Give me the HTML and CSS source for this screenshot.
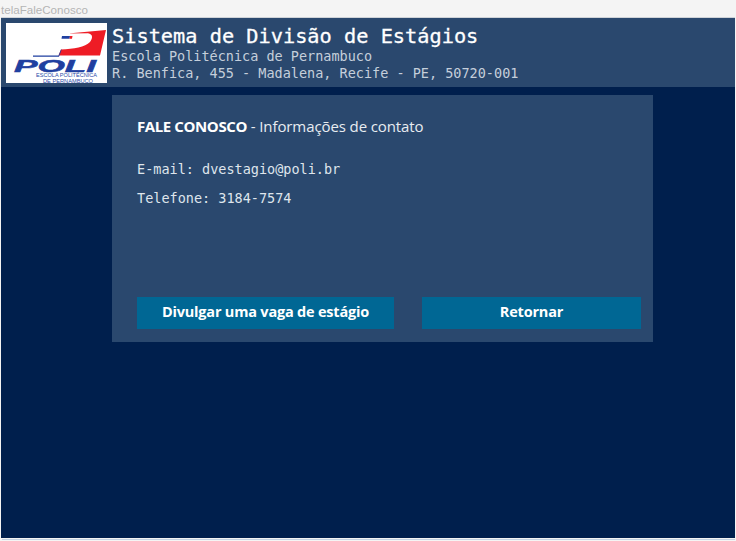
FILE: index.html
```html
<!DOCTYPE html>
<html lang="pt">
<head>
<meta charset="utf-8">
<title>telaFaleConosco</title>
<link rel="stylesheet" href="styles.css">
</head>
<body>
<div class="window">
  <div class="titlebar">telaFaleConosco</div>
  <div class="content">
    <header class="header">
      <svg class="logo" viewBox="0 0 101 60" width="101" height="60">
        <rect width="101" height="60" fill="#fff"/>
        <path d="M62 10.500L100 7L94 32.500H52.500L55 26.500C68 26 79 24 84 19C87 15 87 11 82 10.200Z" fill="#ee1c25"/>
        <path d="M56 13H64L63.500 15.700H55.500Z" fill="#1f3fa0"/>
        <path d="M64 13H66.500L66 15.700H63.500Z" fill="#ee1c25"/>
        <path d="M27 32.500H52.500L55 26.500H55.700L53 33.700H27Z" fill="#1f3fa0"/>
        <text class="logo-poli" x="8" y="49" textLength="82" lengthAdjust="spacingAndGlyphs">POLI</text>
        <text class="logo-small" x="30" y="53.500" textLength="61" lengthAdjust="spacingAndGlyphs">ESCOLA POLITÉCNICA</text>
        <text class="logo-small" x="37" y="59.500" textLength="50" lengthAdjust="spacingAndGlyphs">DE PERNAMBUCO</text>
      </svg>
      <div class="brand">
        <div class="brand-title">Sistema de Divisão de Estágios</div>
        <div class="brand-school">Escola Politécnica de Pernambuco</div>
        <div class="brand-address">R. Benfica, 455 - Madalena, Recife - PE, 50720-001</div>
      </div>
    </header>
    <main class="panel">
      <h1 class="panel-title"><strong>FALE CONOSCO</strong> - Informações de contato</h1>
      <p class="info">E-mail: dvestagio@poli.br</p>
      <p class="info">Telefone: 3184-7574</p>
      <div class="actions">
        <button class="btn btn-wide">Divulgar uma vaga de estágio</button>
        <button class="btn btn-narrow">Retornar</button>
      </div>
    </main>
  </div>
  <div class="footer-line"></div>
</div>
</body>
</html>
```
FILE: styles.css
```css
* { box-sizing: border-box; }
html, body { margin: 0; height: 100%; }
body { background: #f4f4f4; overflow: hidden; }
.window { width: 736px; height: 541px; display: flex; flex-direction: column; }
.titlebar {
  height: 17px;
  padding: 2px 0 0 1px;
  font: 11.600px/15px "Liberation Sans", sans-serif;
  color: #b4b4b4;
  background: #f4f4f4;
}
.content {
  height: 521px;
  margin: 0 1px;
  background: #001f4d;
  border-top: 1px solid #cfd3d8;
}
.footer-line {
  height: 1px;
  margin: 1px 1px 0 2px;
  background: #c6d4e4;
}
.header {
  height: 69px;
  background: #2a486e;
  padding: 5px 5px 0;
  display: flex;
  gap: 5px;
  align-items: flex-start;
}
.logo { display: block; flex: none; }
.brand { font-family: "DejaVu Sans Mono", monospace; margin-top: 1px; }
.brand-title { font-size: 20.300px; line-height: 24px; color: #fff; -webkit-text-stroke: 0.3px #fff; }
.brand-school { font-size: 13.500px; line-height: 17px; color: #c5cfdb; }
.brand-address { font-size: 13.500px; line-height: 17px; color: #c5cfdb; }
.panel {
  width: 541px;
  height: 247px;
  margin: 8px 0 0 111px;
  padding: 21px 12px 0 25px;
  background: #2a486e;
  color: #fff;
  display: flex;
  flex-direction: column;
}
.panel-title {
  margin: 0 0 24px;
  font: 400 15px/20px "Open Sans", sans-serif;
  color: #e8ecf1;
  letter-spacing: -0.1px;
}
.panel-title strong { font-weight: 700; color: #fff; letter-spacing: -0.4px; }
.info {
  margin: 0 0 11px;
  font: 13.500px/18px "DejaVu Sans Mono", monospace;
  color: #dfe5ec;
}
.actions { margin-top: auto; margin-bottom: 13px; display: flex; justify-content: space-between; }
.btn {
  height: 32px;
  border: 0;
  padding: 0 0 2px;
  background: #006794;
  color: #fff;
  font: 700 14.500px/30px "Open Sans", sans-serif;
  letter-spacing: -0.2px;
}
.btn-wide { width: 257px; }
.btn-narrow { width: 219px; }
.logo-poli { font: italic 700 16.500px "Liberation Sans", sans-serif; fill: #1f3fa0; stroke: #1f3fa0; stroke-width: 0.5px; }
.logo-small { font: 5px "Liberation Sans", sans-serif; fill: #2b4aa8; }
```
